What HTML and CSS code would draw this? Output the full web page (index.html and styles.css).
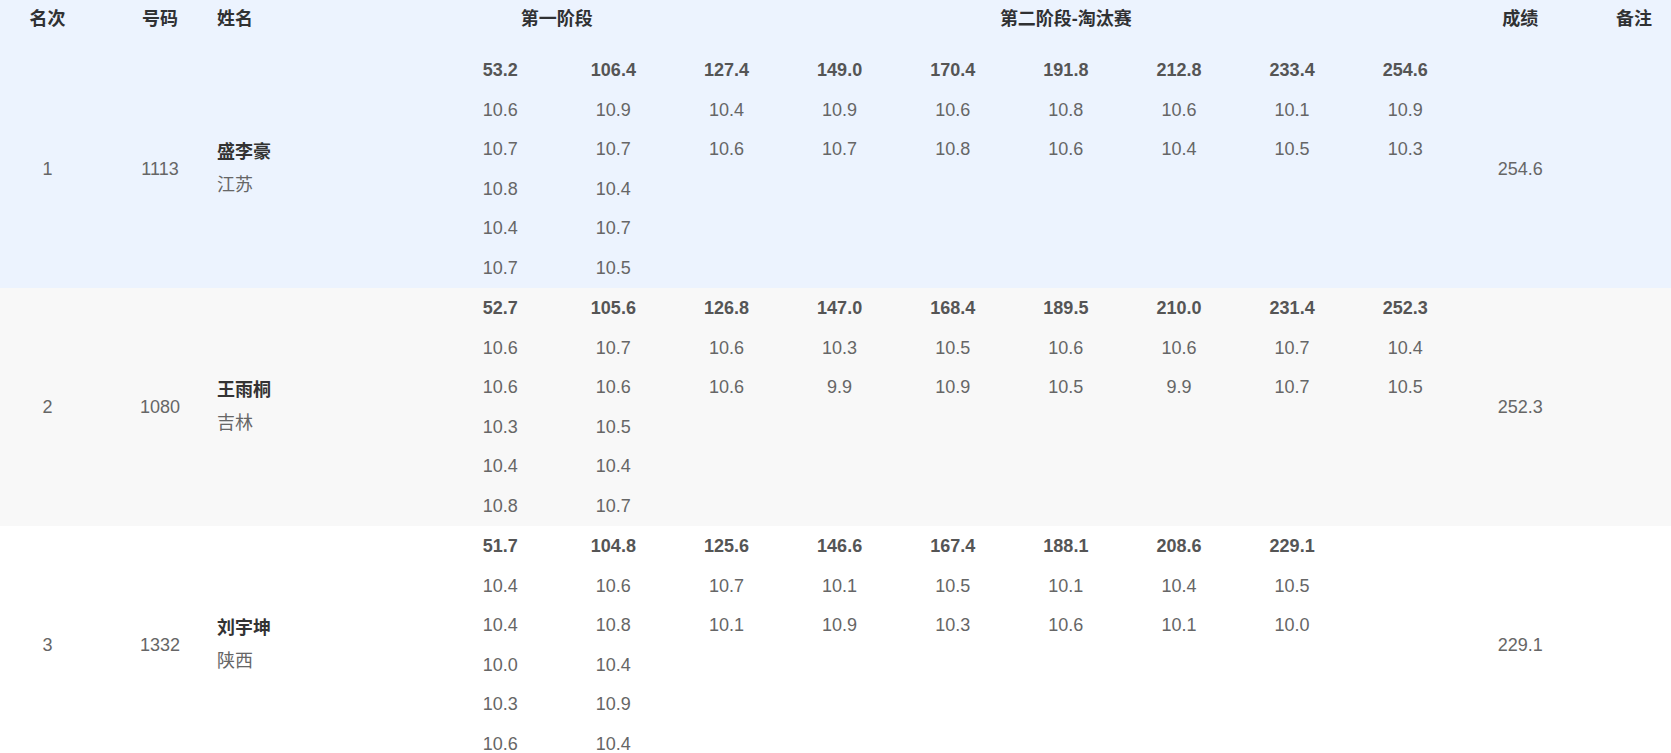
FILE: index.html
```html
<!DOCTYPE html>
<html lang="zh-CN">
<head>
<meta charset="utf-8">
<title>成绩表</title>
<link rel="stylesheet" href="styles.css">
</head>
<body>
<div class="table">
  <div class="thead">
    <div class="th">名次</div>
    <div class="th th-no">号码</div>
    <div class="th th-name">姓名</div>
    <div class="th span2">第一阶段</div>
    <div class="th span7">第二阶段-淘汰赛</div>
    <div class="th">成绩</div>
    <div class="th th-note">备注</div>
  </div>

  <div class="tr tr-current">
    <div class="td mid">1</div>
    <div class="td mid td-no">1113</div>
    <div class="td td-name"><div class="name">盛李豪</div><div class="prov">江苏</div></div>
    <div class="col"><b>53.2</b><span>10.6</span><span>10.7</span><span>10.8</span><span>10.4</span><span>10.7</span></div>
    <div class="col"><b>106.4</b><span>10.9</span><span>10.7</span><span>10.4</span><span>10.7</span><span>10.5</span></div>
    <div class="col"><b>127.4</b><span>10.4</span><span>10.6</span></div>
    <div class="col"><b>149.0</b><span>10.9</span><span>10.7</span></div>
    <div class="col"><b>170.4</b><span>10.6</span><span>10.8</span></div>
    <div class="col"><b>191.8</b><span>10.8</span><span>10.6</span></div>
    <div class="col"><b>212.8</b><span>10.6</span><span>10.4</span></div>
    <div class="col"><b>233.4</b><span>10.1</span><span>10.5</span></div>
    <div class="col"><b>254.6</b><span>10.9</span><span>10.3</span></div>
    <div class="td mid">254.6</div>
    <div class="td mid"></div>
  </div>

  <div class="tr tr-stripe">
    <div class="td mid">2</div>
    <div class="td mid td-no">1080</div>
    <div class="td td-name"><div class="name">王雨桐</div><div class="prov">吉林</div></div>
    <div class="col"><b>52.7</b><span>10.6</span><span>10.6</span><span>10.3</span><span>10.4</span><span>10.8</span></div>
    <div class="col"><b>105.6</b><span>10.7</span><span>10.6</span><span>10.5</span><span>10.4</span><span>10.7</span></div>
    <div class="col"><b>126.8</b><span>10.6</span><span>10.6</span></div>
    <div class="col"><b>147.0</b><span>10.3</span><span>9.9</span></div>
    <div class="col"><b>168.4</b><span>10.5</span><span>10.9</span></div>
    <div class="col"><b>189.5</b><span>10.6</span><span>10.5</span></div>
    <div class="col"><b>210.0</b><span>10.6</span><span>9.9</span></div>
    <div class="col"><b>231.4</b><span>10.7</span><span>10.7</span></div>
    <div class="col"><b>252.3</b><span>10.4</span><span>10.5</span></div>
    <div class="td mid">252.3</div>
    <div class="td mid"></div>
  </div>

  <div class="tr">
    <div class="td mid">3</div>
    <div class="td mid td-no">1332</div>
    <div class="td td-name"><div class="name">刘宇坤</div><div class="prov">陕西</div></div>
    <div class="col"><b>51.7</b><span>10.4</span><span>10.4</span><span>10.0</span><span>10.3</span><span>10.6</span></div>
    <div class="col"><b>104.8</b><span>10.6</span><span>10.8</span><span>10.4</span><span>10.9</span><span>10.4</span></div>
    <div class="col"><b>125.6</b><span>10.7</span><span>10.1</span></div>
    <div class="col"><b>146.6</b><span>10.1</span><span>10.9</span></div>
    <div class="col"><b>167.4</b><span>10.5</span><span>10.3</span></div>
    <div class="col"><b>188.1</b><span>10.1</span><span>10.6</span></div>
    <div class="col"><b>208.6</b><span>10.4</span><span>10.1</span></div>
    <div class="col"><b>229.1</b><span>10.5</span><span>10.0</span></div>
    <div class="col"></div>
    <div class="td mid">229.1</div>
    <div class="td mid"></div>
  </div>
</div>
</body>
</html>
```

FILE: styles.css
```css
html, body {
  margin: 0;
  padding: 0;
  background: #ffffff;
  overflow: hidden;
}

body {
  font-family: "Liberation Sans", "Noto Sans CJK SC", sans-serif;
  font-size: 18px;
  color: #666666;
}

.table {
  width: 1671px;
}

.thead,
.tr {
  display: grid;
  grid-template-columns: 95px 110px 238.7px repeat(9, 113.13px) 117px 1fr;
}

.thead {
  height: 50px;
  background: #ecf3fe;
  align-items: start;
}

.th {
  line-height: 39px;
  font-weight: bold;
  color: #303133;
  text-align: center;
}

.th-no {
  padding-left: 20px;
}

.th-name {
  text-align: left;
  padding-left: 12px;
}

.th-note {
  padding-left: 18px;
}

.span2 {
  grid-column: span 2;
}

.span7 {
  grid-column: span 7;
}

.tr {
  background: #ffffff;
}

.tr-current {
  background: #ecf3fe;
}

.tr-stripe {
  background: #f8f8f8;
}

.td {
  text-align: center;
  padding-top: 1px;
}

.mid {
  display: flex;
  align-items: center;
  justify-content: center;
}

.td-no {
  padding-left: 20px;
}

.td-name {
  display: flex;
  flex-direction: column;
  justify-content: center;
  text-align: left;
  padding-left: 12px;
  padding-top: 0;
  line-height: 33px;
}

.name {
  font-weight: bold;
  color: #333333;
}

.prov {
  color: #666666;
}

.col {
  display: flex;
  flex-direction: column;
  align-items: center;
  padding-top: 1px;
}

.col b,
.col span {
  display: block;
  line-height: 39.5px;
  height: 39.5px;
}

.col b {
  font-weight: bold;
  color: #555555;
}
```
